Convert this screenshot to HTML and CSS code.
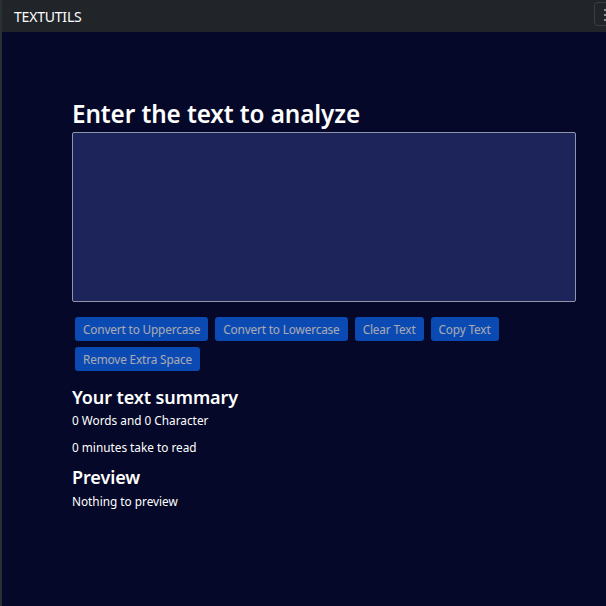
FILE: index.html
```html
<!DOCTYPE html>
<html lang="en">
<head>
<meta charset="utf-8">
<title>TextUtils</title>
<link rel="stylesheet" href="styles.css">
</head>
<body>
<nav class="navbar">
  <span class="brand">TEXTUTILS</span>
  <button class="toggler" aria-label="Toggle navigation"><span class="bar"></span><span class="bar"></span><span class="bar"></span></button>
</nav>
<main class="page">
  <section class="container">
    <h1 class="title">Enter the text to analyze</h1>
    <textarea class="textbox"></textarea>
    <div class="actions">
      <button class="btn" disabled>Convert to Uppercase</button>
      <button class="btn" disabled>Convert to Lowercase</button>
      <button class="btn" disabled>Clear Text</button>
      <button class="btn" disabled>Copy Text</button>
      <button class="btn" disabled>Remove Extra Space</button>
    </div>
  </section>
  <section class="container summary">
    <h2 class="subtitle">Your text summary</h2>
    <p class="info">0 Words and 0 Character</p>
    <p class="info">0 minutes take to read</p>
    <h2 class="subtitle">Preview</h2>
    <p class="info">Nothing to preview</p>
  </section>
</main>
</body>
</html>
```
FILE: styles.css
```css
* { box-sizing: border-box; }
html, body { margin: 0; padding: 0; height: 100%; }
body {
  font-family: "Noto Sans", "Open Sans", sans-serif;
  background: #050828;
  color: #ffffff;
  display: flex;
  flex-direction: column;
  border-left: 2px solid #2a3134;
  overflow: hidden;
}
.navbar {
  height: 32px;
  background: #212529;
  display: flex;
  align-items: center;
  justify-content: space-between;
  padding-left: 12px;
  flex-shrink: 0;
  position: relative;
}
.brand { font-size: 14px; color: #ffffff; letter-spacing: -0.2px; }
.toggler {
  position: absolute;
  right: -30px;
  top: 2px;
  width: 42px;
  height: 24px;
  background: transparent;
  border: 1px solid #3a3f44;
  border-radius: 4px;
  display: flex;
  flex-direction: column;
  gap: 3px;
  padding: 6px 0 0 9px;
}
.toggler .bar { display: block; width: 14px; height: 2px; background: #8c9196; }
.page { flex: 1; padding: 67px 30px 0 70px; }
.container { display: flex; flex-direction: column; }
.title {
  margin: 0 0 3px 0;
  font-size: 24.3px;
  font-weight: 600;
  line-height: 30px;
  letter-spacing: -0.1px;
}
.textbox {
  width: 504px;
  height: 170px;
  background: #1c2459;
  border: 1px solid #8f94ab;
  border-radius: 2px;
  resize: none;
  color: #fff;
}
.actions {
  display: flex;
  flex-wrap: wrap;
  gap: 6px 7px;
  margin-top: 15px;
  padding-left: 3px;
}
.btn {
  font-family: "Noto Sans", "Open Sans", sans-serif;
  font-size: 11.8px;
  height: 24px;
  padding: 0 8px;
  background: #0d6efd;
  color: #ffffff;
  border: none;
  border-radius: 3px;
  opacity: 0.65;
  letter-spacing: -0.15px;
}
.summary { margin-top: 14px; }
.subtitle {
  margin: 0 0 2px 0;
  font-size: 18px;
  font-weight: 600;
  line-height: 25px;
  letter-spacing: -0.1px;
}
.info + .subtitle { margin-top: -1px; }
.subtitle + .info + .info + .subtitle + .info { margin-top: 1px; }
.info { margin: 0 0 10px 0; font-size: 11.8px; line-height: 17px; }
```
